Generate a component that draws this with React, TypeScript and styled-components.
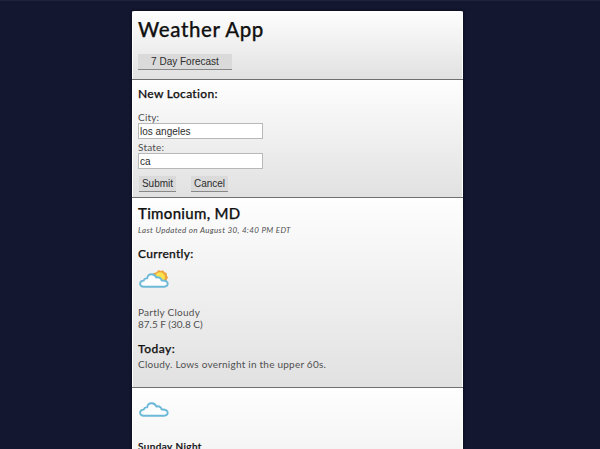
import React from "react";
import styled, { createGlobalStyle } from "styled-components";

const GlobalStyle = createGlobalStyle`
  * { box-sizing: border-box; }
  html, body { margin: 0; height: 100%; overflow: hidden; background: #13172f; }
`;

const Page = styled.div`
  height: 449px;
  overflow: hidden;
  padding: 10px 137px 0 132px;
  background: #13172f;
  border-top: 1px solid #20233c;
  font-family: Lato, "Open Sans", sans-serif;
  color: #505050;
`;

const Card = styled.main`
  width: 331px;
  border-radius: 2px 2px 0 0;
  overflow: hidden;
  box-shadow: 0 0 3px #050718;
`;

const Panel = styled.section<{ $height: number; $top: number }>`
  height: ${(p) => p.$height}px;
  padding: ${(p) => p.$top}px 6px 0;
  border-bottom: 1px solid #707070;
  background: linear-gradient(180deg, #fefefe, #e1e1e1);
  box-shadow: inset 1px 0 #fff, inset -1px 0 #fff;
  display: flex;
  flex-direction: column;
  align-items: flex-start;
`;

const Line = styled.div<{ $size: number; $height: number; $gap?: number; $spacing?: number }>`
  font-size: ${(p) => p.$size}px;
  line-height: ${(p) => p.$height}px;
  margin-top: ${(p) => p.$gap ?? 0}px;
  letter-spacing: ${(p) => p.$spacing ?? 0}px;
  white-space: nowrap;
`;

const Heading = styled(Line).attrs({ as: "h2" })`
  margin-bottom: 0;
  font-weight: 500;
  color: #111;
  -webkit-text-stroke: 0.25px #111;
`;

const Updated = styled(Line)`
  font-style: italic;
`;

const Button = styled.button<{ $width: number }>`
  width: ${(p) => p.$width}px;
  height: 16px;
  padding: 0;
  border: 0;
  border-bottom: 1px solid #888;
  background: #dadada;
  font: 10px/15px "Liberation Sans", Arial, sans-serif;
  color: #2c2c2c;
`;

const ForecastButton = styled(Button)`
  margin-top: 13px;
`;

const Input = styled.input`
  width: 125px;
  height: 16px;
  padding: 0 1px;
  border: 1px solid #b8b8b8;
  background: #fff;
  font: 10px "Liberation Sans", Arial, sans-serif;
  color: #2c2c2c;
`;

const Actions = styled.div`
  display: flex;
  gap: 15px;
  margin: 7px 0 0 1px;
`;

const Icon = styled.svg`
  display: block;
  flex: none;
`;

function WeatherIcon({ sunny = false }: { sunny?: boolean }) {
  return (
    <Icon width="32" height="22" viewBox="0 0 32 22">
      {sunny && (
        <g>
          <path
            d="M20.800 1l2 .9 2.200-.6 1.500 1.900 2.200.8.1 2.400 1.200 2-1.200 2.100-.1 2.300-2.500 1.300-7-1L14 7l1.500-3 2.600-.4z"
            fill="#eda23c"
          />
          <circle cx="22" cy="8.300" r="5" fill="#fce04c" />
        </g>
      )}
      <path
        d="M5.800 17.700C3.200 17.700 2 16.200 2.100 14.600c.1-1.900 1.500-3 3.700-3 .3-1.600 1.800-2.500 3.400-2.200C9.300 6.700 11.200 5.200 13.600 5.300c2.300.1 4 1.200 4.700 3.200 2.800-.7 5 .6 5.400 3.100 3.400-.4 6 .7 6 3 0 2-1.500 3.100-3.700 3.100z"
        fill="#fbfdfe"
        stroke="#6cb8d7"
        strokeWidth="1.900"
        strokeLinejoin="round"
      />
    </Icon>
  );
}

const IconSlot = styled.div<{ $gap: number }>`
  margin-top: ${(p) => p.$gap}px;
`;

export default function App() {
  return (
    <>
      <GlobalStyle />
      <Page>
        <Card>
          <Panel $height={69} $top={6}>
            <Heading $size={20.5} $height={24} $spacing={0.6}>Weather App</Heading>
            <ForecastButton $width={94}>7 Day Forecast</ForecastButton>
          </Panel>
          <Panel $height={118} $top={6}>
            <Heading $size={12} $height={16} $spacing={0.32}>New Location:</Heading>
            <Line as="label" htmlFor="city" $size={10} $height={11} $gap={10} $spacing={0.2}>City:</Line>
            <Input id="city" defaultValue="los angeles" />
            <Line as="label" htmlFor="state" $size={10} $height={11} $gap={3} $spacing={0.2}>State:</Line>
            <Input id="state" defaultValue="ca" />
            <Actions>
              <Button $width={37}>Submit</Button>
              <Button $width={37}>Cancel</Button>
            </Actions>
          </Panel>
          <Panel $height={190} $top={5}>
            <Heading $size={15} $height={20} $spacing={0.3}>Timonium, MD</Heading>
            <Updated $size={8} $height={10} $gap={2} $spacing={0.35}>Last Updated on August 30, 4:40 PM EDT</Updated>
            <Heading $size={12} $height={16} $gap={11} $spacing={0.3}>Currently:</Heading>
            <IconSlot $gap={7}><WeatherIcon sunny /></IconSlot>
            <Line $size={10} $height={12} $gap={15} $spacing={0.24}>Partly Cloudy</Line>
            <Line $size={10} $height={12}>87.5 F (30.8 C)</Line>
            <Heading $size={12} $height={16} $gap={11} $spacing={0.5}>Today:</Heading>
            <Line $size={10} $height={12} $gap={1} $spacing={0.23}>Cloudy. Lows overnight in the upper 60s.</Line>
          </Panel>
          <Panel $height={190} $top={10}>
            <WeatherIcon />
            <Heading $size={10} $height={14} $gap={19} $spacing={0.42}>Sunday Night</Heading>
          </Panel>
        </Card>
      </Page>
    </>
  );
}
